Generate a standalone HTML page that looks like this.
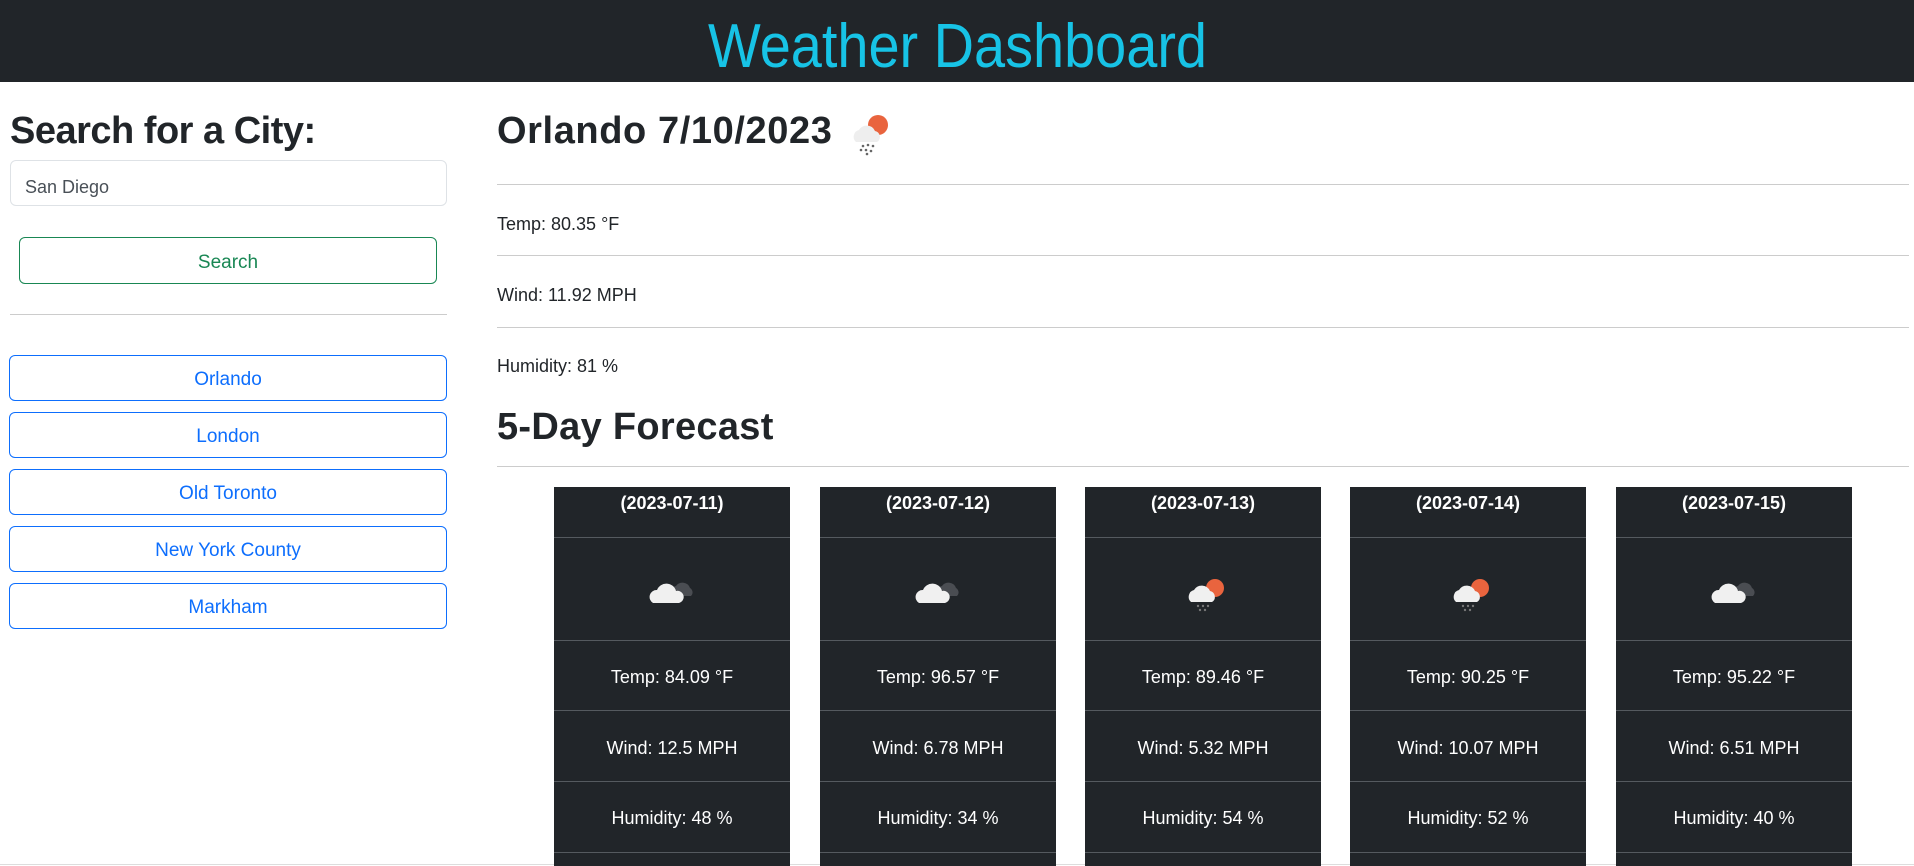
<!DOCTYPE html>
<html><head><meta charset="utf-8"><style>
*{margin:0;padding:0;box-sizing:border-box}
body{width:1914px;height:866px;overflow:hidden;background:#fff;font-family:"Liberation Sans",sans-serif;color:#212529;position:relative}
.hdr{position:absolute;left:0;top:0;width:1914px;height:82px;background:#212529}
.abs{position:absolute}
.h2{font-size:38px;font-weight:bold;line-height:1}
.txt{font-size:18px;line-height:1}
.hr{position:absolute;height:1px;background:#ccc}
.btn{position:absolute;left:9px;width:438px;height:46px;border:1px solid #0d6efd;border-radius:6px;color:#0d6efd;font-size:19px;display:flex;align-items:center;justify-content:center;padding-top:4px}
.card{position:absolute;top:487px;width:236px;height:379px;background:#212529;color:#fff;text-align:center}
.card .row{position:absolute;left:0;width:100%;border-top:1px solid #555a5f}
.card .t{position:absolute;left:0;width:100%;font-size:18px;line-height:1}
</style></head><body>
<div class="hdr"><svg width="1914" height="82" style="position:absolute;left:0;top:0"><text x="708" y="67" font-family="Liberation Sans" font-size="62" fill="#17c3e6" textLength="499" lengthAdjust="spacingAndGlyphs">Weather Dashboard</text></svg></div>

<div class="abs h2" style="left:10px;top:112px;letter-spacing:-0.5px">Search for a City:</div>
<div class="abs" style="left:10px;top:160px;width:437px;height:46px;border:1px solid #dee2e6;border-radius:6px;font-size:18px;color:#495057;padding:16px 0 0 14px">San Diego</div>
<div class="abs" style="left:19px;top:237px;width:418px;height:47px;border:1px solid #198754;border-radius:6px;color:#198754;font-size:19px;display:flex;align-items:center;justify-content:center;padding-top:4px">Search</div>
<div class="hr" style="left:10px;top:314px;width:437px"></div>
<div class="btn" style="top:355px">Orlando</div>
<div class="btn" style="top:412px">London</div>
<div class="btn" style="top:469px">Old Toronto</div>
<div class="btn" style="top:526px">New York County</div>
<div class="btn" style="top:583px">Markham</div>

<div class="abs h2" style="left:497px;top:112px;letter-spacing:0.6px">Orlando 7/10/2023</div>
<svg class="abs" style="left:846px;top:110px" width="46" height="46" viewBox="0 0 46 46">
<circle cx="32" cy="15" r="10" fill="#e9643e"/>
<path d="M10 32 a7 7 0 0 1 3-12 a9 9 0 0 1 16 1 a6 6 0 0 1 2 11z" fill="#eeeeee"/>
<g fill="#666"><circle cx="17" cy="36" r="1.3"/><circle cx="22" cy="35" r="1.3"/><circle cx="27" cy="36" r="1.3"/><circle cx="15" cy="40" r="1.3"/><circle cx="20" cy="40" r="1.3"/><circle cx="25" cy="41" r="1.3"/><circle cx="21" cy="44" r="1.3"/></g></svg>
<div class="hr" style="left:497px;top:184px;width:1412px"></div>
<div class="abs txt" style="left:497px;top:215px">Temp: 80.35 °F</div>
<div class="hr" style="left:497px;top:255px;width:1412px"></div>
<div class="abs txt" style="left:497px;top:286px">Wind: 11.92 MPH</div>
<div class="hr" style="left:497px;top:327px;width:1412px"></div>
<div class="abs txt" style="left:497px;top:357px">Humidity: 81 %</div>
<div class="abs h2" style="left:497px;top:408px;letter-spacing:0.3px">5-Day Forecast</div>
<div class="hr" style="left:497px;top:466px;width:1412px"></div>
<div class="hr" style="left:0;top:864px;width:1914px;background:#ddd"></div>

<svg width="0" height="0" style="position:absolute"><defs>
<g id="cl"><path d="M24 24 a6 6 0 0 1 3-10 a8 8 0 0 1 14 2 a5 5 0 0 1 1 8z" fill="#4a4d52"/><path d="M4 31 a7 7 0 0 1 4-13 a10 10 0 0 1 19 1 a6 6 0 0 1 3 12z" fill="#f0f0f0"/></g>
<g id="rn"><circle cx="30" cy="15" r="9" fill="#e9643e"/><path d="M6 29 a7 7 0 0 1 3-12 a9 9 0 0 1 16 1 a6 6 0 0 1 2 11z" fill="#f0f0f0"/><g fill="#777"><circle cx="13" cy="33" r="1.2"/><circle cx="18" cy="33" r="1.2"/><circle cx="23" cy="33" r="1.2"/><circle cx="15" cy="37" r="1.2"/><circle cx="20" cy="37" r="1.2"/></g></g>
</defs></svg>

<div class="card" style="left:554px"><div class="t" style="top:7px;font-weight:bold">(2023-07-11)</div><div class="row" style="top:50px"></div><svg style="position:absolute;left:95px;top:85px" width="46" height="40"><use href="#cl"/></svg><div class="row" style="top:153px"></div><div class="t" style="top:181px">Temp: 84.09 °F</div><div class="row" style="top:223px"></div><div class="t" style="top:252px">Wind: 12.5 MPH</div><div class="row" style="top:294px"></div><div class="t" style="top:322px">Humidity: 48 %</div><div class="row" style="top:365px"></div></div>
<div class="card" style="left:820px"><div class="t" style="top:7px;font-weight:bold">(2023-07-12)</div><div class="row" style="top:50px"></div><svg style="position:absolute;left:95px;top:85px" width="46" height="40"><use href="#cl"/></svg><div class="row" style="top:153px"></div><div class="t" style="top:181px">Temp: 96.57 °F</div><div class="row" style="top:223px"></div><div class="t" style="top:252px">Wind: 6.78 MPH</div><div class="row" style="top:294px"></div><div class="t" style="top:322px">Humidity: 34 %</div><div class="row" style="top:365px"></div></div>
<div class="card" style="left:1085px"><div class="t" style="top:7px;font-weight:bold">(2023-07-13)</div><div class="row" style="top:50px"></div><svg style="position:absolute;left:100px;top:86px" width="46" height="42"><use href="#rn"/></svg><div class="row" style="top:153px"></div><div class="t" style="top:181px">Temp: 89.46 °F</div><div class="row" style="top:223px"></div><div class="t" style="top:252px">Wind: 5.32 MPH</div><div class="row" style="top:294px"></div><div class="t" style="top:322px">Humidity: 54 %</div><div class="row" style="top:365px"></div></div>
<div class="card" style="left:1350px"><div class="t" style="top:7px;font-weight:bold">(2023-07-14)</div><div class="row" style="top:50px"></div><svg style="position:absolute;left:100px;top:86px" width="46" height="42"><use href="#rn"/></svg><div class="row" style="top:153px"></div><div class="t" style="top:181px">Temp: 90.25 °F</div><div class="row" style="top:223px"></div><div class="t" style="top:252px">Wind: 10.07 MPH</div><div class="row" style="top:294px"></div><div class="t" style="top:322px">Humidity: 52 %</div><div class="row" style="top:365px"></div></div>
<div class="card" style="left:1616px"><div class="t" style="top:7px;font-weight:bold">(2023-07-15)</div><div class="row" style="top:50px"></div><svg style="position:absolute;left:95px;top:85px" width="46" height="40"><use href="#cl"/></svg><div class="row" style="top:153px"></div><div class="t" style="top:181px">Temp: 95.22 °F</div><div class="row" style="top:223px"></div><div class="t" style="top:252px">Wind: 6.51 MPH</div><div class="row" style="top:294px"></div><div class="t" style="top:322px">Humidity: 40 %</div><div class="row" style="top:365px"></div></div>
</body></html>
